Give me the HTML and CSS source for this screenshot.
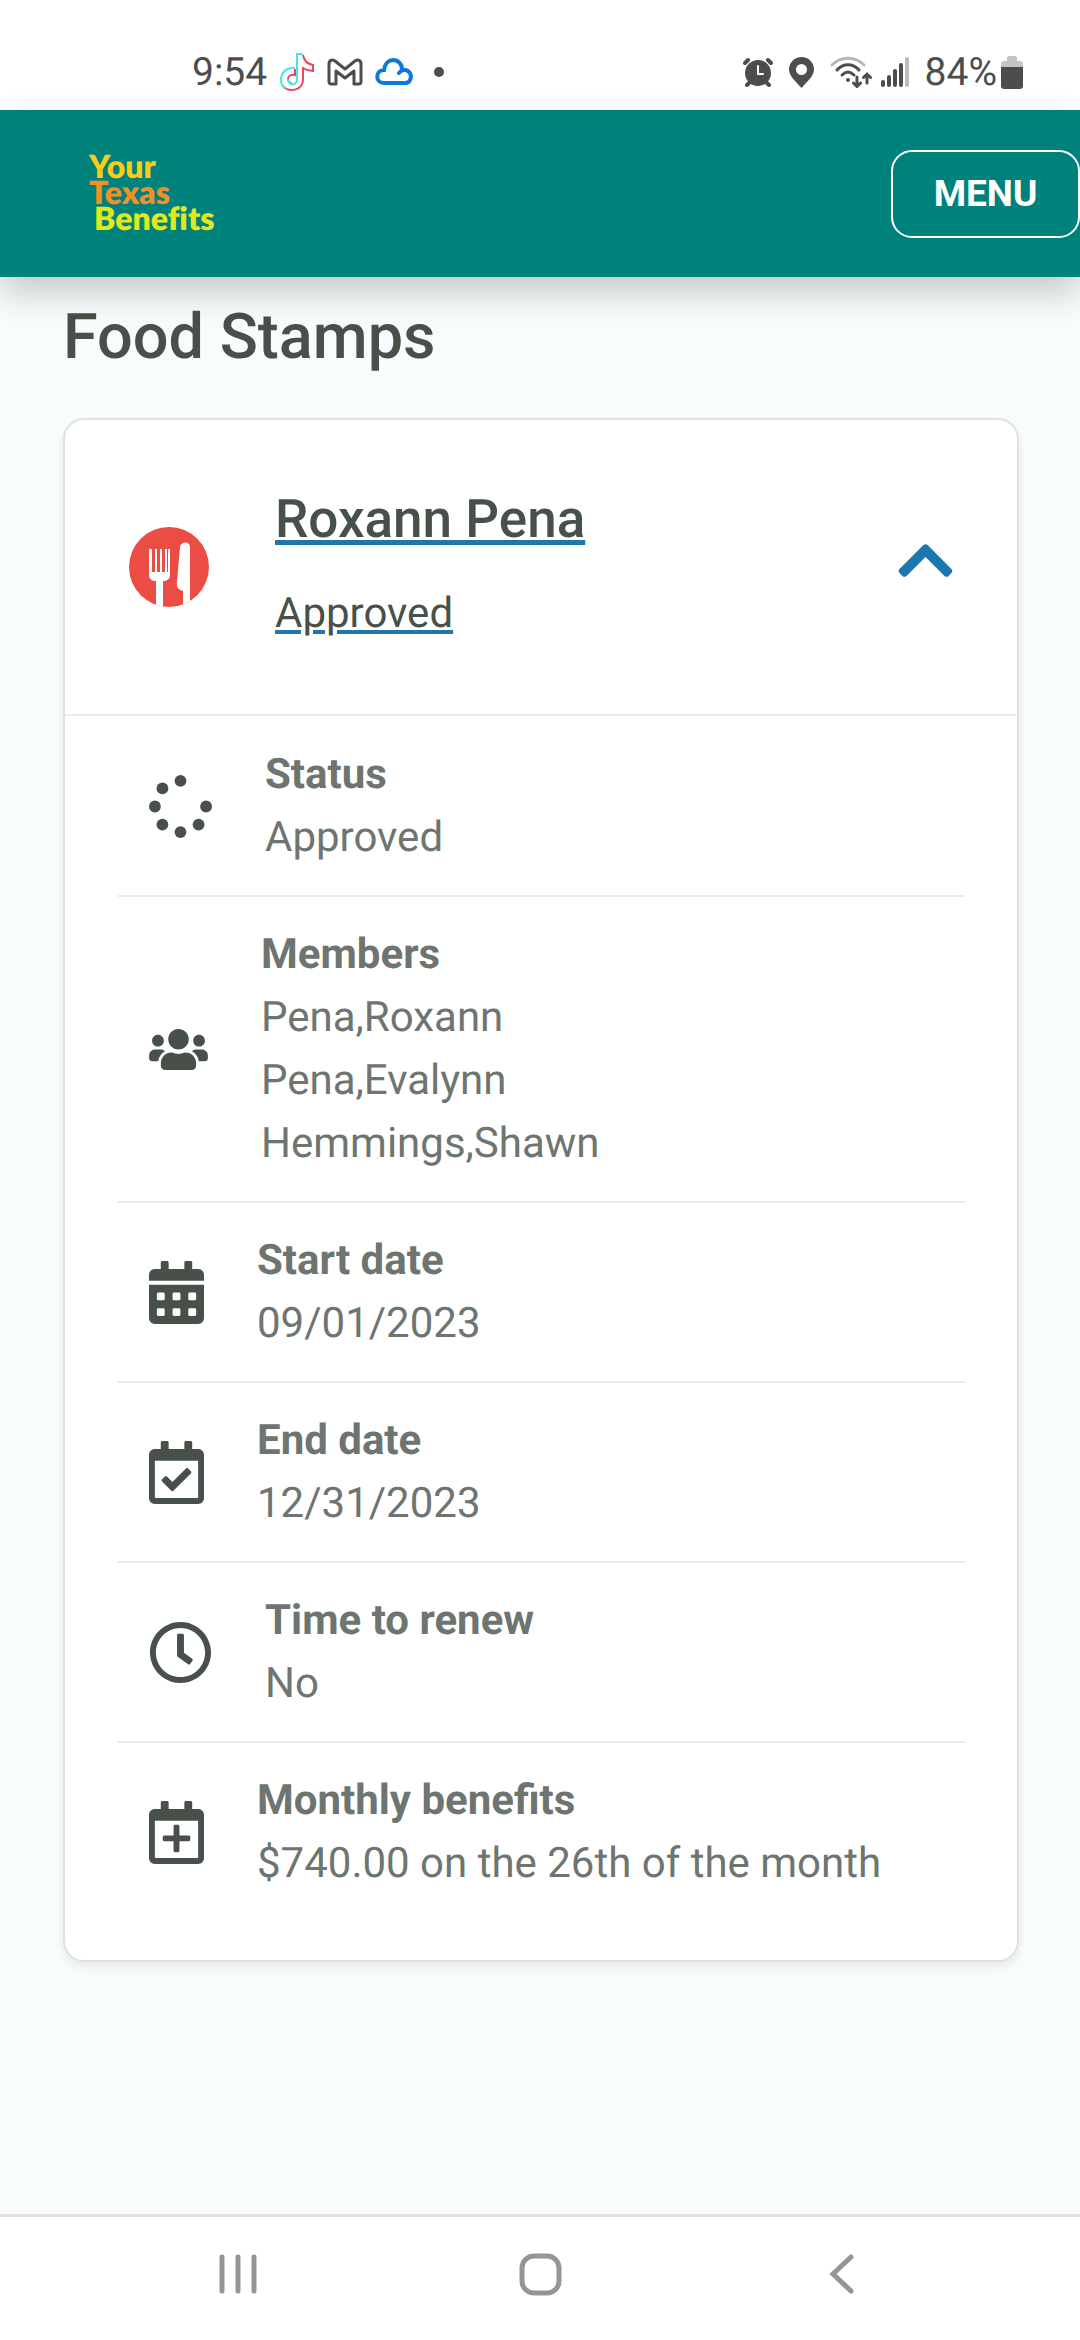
FILE: index.html
```html
<!DOCTYPE html>
<html lang="en">
<head>
    <meta charset="UTF-8">
    <meta name="viewport" content="width=device-width, initial-scale=1.0">
    <title>Your Texas Benefits</title>
    <link rel="stylesheet" href="styles.css">
</head>
<body>

    <!-- Phone status bar -->
    <div class="status-bar">
        <div class="status-left">
            <span class="clock">9:54</span>
            <svg width="36" height="40" viewBox="0 0 36 40" fill="none" stroke-width="2">
                <path stroke="#f0435f" d="M24 3c1 6 4 9 10 10v6c-4 0-7-1-10-3v11c0 7-5 11-11 11-4 0-7-1-9-4"/>
                <path stroke="#4de3e3" d="M16 16c-8-1-14 4-14 12 0 4 2 7 5 8"/>
                <path stroke="#f0435f" d="M16 17v6c-4-1-7 1-7 4 0 2 2 4 4 5"/>
                <path stroke="#4de3e3" d="M24 2h-6v26c0 3-3 5-6 4-2-1-3-3-3-5"/>
            </svg>
            <svg width="36" height="28" viewBox="0 0 36 28" fill="none" stroke="#4d4d4d" stroke-width="3" stroke-linejoin="round">
                <path d="M2 24V6c0-4 4-5 6-3l10 8 10-8c2-2 6-1 6 3v18c0 1-1 2-2 2h-5V13l-9 7-9-7v13H4c-1 0-2-1-2-2z"/>
            </svg>
            <svg width="38" height="28" viewBox="0 0 38 28" fill="none" stroke="#0a78dc" stroke-width="4" stroke-linecap="round">
                <path d="M24 15c2-3 6-4 9-2 5 4 3 12-3 12H9c-9 0-9-13 0-13C10 5 14 2 18 2c5 0 9 4 9 9"/>
            </svg>
            <span class="dot"></span>
        </div>
        <div class="status-right">
            <svg width="30" height="30" viewBox="0 0 30 30" fill="#4d4d4d" stroke="#4d4d4d" stroke-width="4" stroke-linecap="round">
                <circle cx="15" cy="16" r="11"/>
                <path d="M2 6l3-3M28 6l-3-3M4 28l3-3M26 28l-3-3"/>
                <path d="M15 9v8h5" fill="none" stroke="#fff" stroke-width="2"/>
            </svg>
            <svg width="25" height="31" viewBox="0 0 25 31" fill="#4d4d4d">
                <path fill-rule="evenodd" d="M12.500 0C5.500 0 0 5.500 0 12.500c0 7 8 13 12.500 18.500C17 25.500 25 19.500 25 12.500 25 5.500 19.500 0 12.500 0zm0 7a5.500 5.500 0 1 1 0 11 5.500 5.500 0 0 1 0-11z"/>
            </svg>
            <svg class="wifi" width="42" height="32" viewBox="0 0 42 32" fill="none" stroke="#4d4d4d" stroke-width="3" stroke-linecap="round">
                <path stroke="#b8b8b8" d="M2 9c9-9 23-9 32 0"/>
                <path d="M7 14c6-7 16-7 22 0M12 19c4-4 8-4 12 0"/>
                <circle cx="18" cy="24" r="1" fill="#4d4d4d" stroke-width="2"/>
                <path d="M27 21v9M23.500 27l3.500 3.500 3.500-3.500M37 27v-9M33.500 21.500L37 18l3.500 3.500"/>
            </svg>
            <svg width="28" height="30" viewBox="0 0 28 30" fill="#4d4d4d">
                <rect x="0" y="23" width="4" height="7" rx="2"/>
                <rect x="6" y="18" width="4" height="12" rx="2"/>
                <rect x="12" y="12" width="4" height="18" rx="2"/>
                <rect x="18" y="6" width="4" height="24" rx="2"/>
                <rect x="24" y="0" width="4" height="30" rx="2" fill="#bcbcbc"/>
            </svg>
            <span class="battery-text">84%</span>
            <svg class="battery" width="22" height="33" viewBox="0 0 22 33">
                <path fill="#c4c4c4" d="M6 5V2c0-1 1-2 2-2h6c1 0 2 1 2 2v3h3c2 0 3 1 3 3v5H0V8c0-2 1-3 3-3z"/>
                <path fill="#4d4d4d" d="M0 11h22v19c0 2-1 3-3 3H3c-2 0-3-1-3-3z"/>
            </svg>
        </div>
    </div>

    <!-- Site header -->
    <header class="site-header">
        <a href="#" class="logo">
            <span class="logo-your">Your</span>
            <span class="logo-texas">Texas</span>
            <span class="logo-benefits">Benefits</span>
        </a>
        <button type="button" class="menu-btn">MENU</button>
    </header>

    <main>
        <h1>Food Stamps</h1>

        <section class="card">
            <div class="card-header">
                <svg class="food-icon" viewBox="0 0 81 81">
                    <defs>
                        <clipPath id="plate"><circle cx="40" cy="40" r="40"/></clipPath>
                    </defs>
                    <g clip-path="url(#plate)">
                        <rect width="81" height="81" fill="#eb4d45"/>
                        <path fill="#fff" d="M20 22h3v23h3V22h2v23h3V22h2v23h3V22h2v23h1V22h2v26c0 4-3 6-7 6v27h-7V54c-4 0-7-2-7-6z"/>
                        <path fill="#fff" d="M51 20c1-6 10-6 10 0v61h-7V64c-5-1-7-4-6-9z"/>
                    </g>
                </svg>
                <div class="card-title">
                    <a href="#" class="person">Roxann Pena</a>
                    <a href="#" class="result">Approved</a>
                </div>
                <button type="button" class="toggle-btn" aria-label="Collapse">
                    <svg viewBox="0 0 448 512"><path d="M240.971 130.524l194.343 194.343c9.373 9.373 9.373 24.569 0 33.941l-22.667 22.667c-9.357 9.357-24.522 9.375-33.901.04L224 227.495 69.255 381.516c-9.379 9.335-24.544 9.317-33.901-.04l-22.667-22.667c-9.373-9.373-9.373-24.569 0-33.941L207.03 130.525c9.372-9.373 24.568-9.373 33.941-.001z"/></svg>
                </button>
            </div>

            <!-- Case details -->
            <ul class="details">
                <li>
                    <svg class="icon" viewBox="0 0 512 512">
                        <circle cx="256" cy="48" r="48"/>
                        <circle cx="464" cy="256" r="48"/>
                        <circle cx="403" cy="403" r="48"/>
                        <circle cx="256" cy="464" r="48"/>
                        <circle cx="109" cy="403" r="48"/>
                        <circle cx="48" cy="256" r="48"/>
                        <circle cx="109" cy="109" r="48"/>
                    </svg>
                    <div>
                        <h2>Status</h2>
                        <p>Approved</p>
                    </div>
                </li>
                <li>
                    <svg class="icon icon-users" viewBox="0 0 640 512"><path d="M96 224c35.300 0 64-28.700 64-64s-28.700-64-64-64-64 28.700-64 64 28.700 64 64 64zm448 0c35.300 0 64-28.700 64-64s-28.700-64-64-64-64 28.700-64 64 28.700 64 64 64zm32 32h-64c-17.600 0-33.500 7.100-45.100 18.600 40.300 22.100 68.900 62 75.100 109.400h66c17.700 0 32-14.300 32-32v-32c0-35.300-28.700-64-64-64zm-256 0c61.900 0 112-50.100 112-112S381.900 32 320 32 208 82.100 208 144s50.100 112 112 112zm76.800 32h-8.300c-20.800 10-43.900 16-68.500 16s-47.600-6-68.500-16h-8.300C179.600 288 128 339.600 128 403.200V432c0 26.500 21.500 48 48 48h288c26.500 0 48-21.500 48-48v-28.800c0-63.600-51.600-115.200-115.200-115.200zm-223.700-13.400C161.500 263.100 145.600 256 128 256H64c-35.300 0-64 28.700-64 64v32c0 17.700 14.300 32 32 32h65.900c6.300-47.400 34.900-87.300 75.200-109.400z"/></svg>
                    <div>
                        <h2>Members</h2>
                        <p>Pena,Roxann</p>
                        <p>Pena,Evalynn</p>
                        <p>Hemmings,Shawn</p>
                    </div>
                </li>
                <li>
                    <svg class="icon icon-calendar" viewBox="0 0 448 512">
                        <path d="M448 160H0v-48c0-26.500 21.500-48 48-48h48V12c0-6.600 5.400-12 12-12h40c6.600 0 12 5.400 12 12v52h128V12c0-6.600 5.400-12 12-12h40c6.600 0 12 5.400 12 12v52h48c26.500 0 48 21.500 48 48zM0 192h448v272c0 26.500-21.500 48-48 48H48c-26.500 0-48-21.500-48-48z"/>
                        <g fill="#fff">
                            <rect x="64" y="256" width="64" height="64" rx="12"/>
                            <rect x="192" y="256" width="64" height="64" rx="12"/>
                            <rect x="320" y="256" width="64" height="64" rx="12"/>
                            <rect x="64" y="384" width="64" height="64" rx="12"/>
                            <rect x="192" y="384" width="64" height="64" rx="12"/>
                            <rect x="320" y="384" width="64" height="64" rx="12"/>
                        </g>
                    </svg>
                    <div>
                        <h2>Start date</h2>
                        <p>09/01/2023</p>
                    </div>
                </li>
                <li>
                    <svg class="icon icon-calendar" viewBox="0 0 448 512"><path d="M400 64h-48V12c0-6.627-5.373-12-12-12h-40c-6.627 0-12 5.373-12 12v52H160V12c0-6.627-5.373-12-12-12h-40c-6.627 0-12 5.373-12 12v52H48C21.490 64 0 85.490 0 112v352c0 26.510 21.490 48 48 48h352c26.510 0 48-21.490 48-48V112c0-26.510-21.490-48-48-48zm-6 400H54a6 6 0 0 1-6-6V160h352v298a6 6 0 0 1-6 6zm-52.849-200.650L198.842 404.519c-4.705 4.667-12.303 4.637-16.971-.068l-75.091-75.699c-4.667-4.705-4.637-12.303.068-16.971l22.719-22.536c4.705-4.667 12.303-4.637 16.970.069l44.104 44.461 111.072-110.181c4.705-4.667 12.303-4.637 16.971.068l22.536 22.718c4.667 4.705 4.636 12.303-.069 16.970z"/></svg>
                    <div>
                        <h2>End date</h2>
                        <p>12/31/2023</p>
                    </div>
                </li>
                <li>
                    <svg class="icon" viewBox="0 0 512 512"><path d="M256 8C119 8 8 119 8 256s111 248 248 248 248-111 248-248S393 8 256 8zm0 448c-110.500 0-200-89.500-200-200S145.500 56 256 56s200 89.500 200 200-89.500 200-200 200zm61.800-104.400l-84.900-61.700c-3.100-2.300-4.900-5.900-4.900-9.700V116c0-6.600 5.400-12 12-12h32c6.600 0 12 5.400 12 12v141.700l66.800 48.600c5.400 3.900 6.500 11.400 2.600 16.800L334.600 349c-3.900 5.300-11.400 6.500-16.800 2.600z"/></svg>
                    <div>
                        <h2>Time to renew</h2>
                        <p>No</p>
                    </div>
                </li>
                <li>
                    <svg class="icon icon-calendar" viewBox="0 0 448 512"><path d="M336 292v24c0 6.600-5.400 12-12 12h-76v76c0 6.600-5.400 12-12 12h-24c-6.600 0-12-5.400-12-12v-76h-76c-6.600 0-12-5.400-12-12v-24c0-6.600 5.400-12 12-12h76v-76c0-6.600 5.400-12 12-12h24c6.600 0 12 5.400 12 12v76h76c6.600 0 12 5.400 12 12zm112-180v352c0 26.500-21.500 48-48 48H48c-26.500 0-48-21.500-48-48V112c0-26.500 21.500-48 48-48h48V12c0-6.600 5.400-12 12-12h40c6.600 0 12 5.400 12 12v52h128V12c0-6.600 5.400-12 12-12h40c6.600 0 12 5.400 12 12v52h48c26.500 0 48 21.500 48 48zm-48 346V160H48v298c0 3.300 2.700 6 6 6h340c3.300 0 6-2.700 6-6z"/></svg>
                    <div>
                        <h2>Monthly benefits</h2>
                        <p>$740.00 on the 26th of the month</p>
                    </div>
                </li>
            </ul>
        </section>
    </main>

    <!-- Phone navigation -->
    <nav class="phone-nav">
        <button type="button" aria-label="Recent apps">
            <svg width="44" height="44" viewBox="0 0 44 44"><path d="M6 5v34M22 5v34M38 5v34"/></svg>
        </button>
        <button type="button" aria-label="Home">
            <svg width="44" height="44" viewBox="0 0 44 44"><rect x="4" y="4" width="37" height="37" rx="12"/></svg>
        </button>
        <button type="button" aria-label="Back">
            <svg width="44" height="44" viewBox="0 0 44 44"><path d="M31 5L13 22l18 17"/></svg>
        </button>
    </nav>

</body>
</html>
```
FILE: styles.css
```css
* {
    box-sizing: border-box;
}

body {
    margin: 0;
    min-height: 100vh;
    display: flex;
    flex-direction: column;
    font-family: Roboto, Arial, sans-serif;
    font-size: 42px;
    line-height: 63px;
    text-rendering: geometricPrecision;
    color: #48504a;
    background-color: #f8fcfd;
    overflow-x: hidden;
}

h1, h2, p, ul {
    margin: 0;
    padding: 0;
}

svg {
    display: block;
    flex: none;
}

button {
    font-family: inherit;
    cursor: pointer;
}

/* Status bar */
.status-bar {
    display: flex;
    justify-content: space-between;
    height: 110px;
    padding: 34px 57px 0 192px;
    background-color: #fff;
    color: #4d4d4d;
    font-size: 39px;
}

.status-left,
.status-right {
    display: flex;
    align-items: center;
    height: 76px;
}

.status-left {
    gap: 12px;
}

.status-right {
    gap: 16px;
}

.wifi {
    margin-right: -7px;
}

.battery-text {
    margin-right: -12px;
}

.dot {
    width: 10px;
    height: 10px;
    margin-left: 9px;
    border-radius: 50%;
    background-color: #4d4d4d;
}

/* Site header */
.site-header {
    position: relative;
    display: flex;
    align-items: center;
    justify-content: space-between;
    height: 167px;
    padding-left: 89px;
    background-color: #00827c;
    box-shadow: 0 16px 32px rgba(0, 0, 0, 0.2);
}

.logo {
    display: flex;
    flex-direction: column;
    padding-bottom: 4px;
    font-family: Lato, sans-serif;
    font-size: 32px;
    font-weight: 800;
    font-variant-ligatures: none;
    line-height: 26px;
    text-decoration: none;
}

.logo-your {
    color: #fdcb15;
}

.logo-texas {
    color: #f09027;
}

.logo-benefits {
    padding-left: 5px;
    color: #e2e81e;
}

.menu-btn {
    width: 189px;
    height: 88px;
    border: 2px solid #fff;
    border-radius: 21px;
    background: none;
    color: #fff;
    font-size: 37px;
    font-weight: bold;
}

/* Content */
main {
    flex: 1;
    padding: 23px 61px 60px 63px;
}

h1 {
    margin-bottom: 42px;
    font-size: 63px;
    font-weight: 500;
    line-height: 76px;
}

.card {
    background-color: #fff;
    border: 2px solid #dee2e6;
    border-radius: 21px;
    box-shadow: 0 5px 10px rgba(0, 0, 0, 0.08);
}

.card-header {
    display: flex;
    align-items: center;
    height: 296px;
    padding: 0 64px;
    border-bottom: 2px solid #e6edee;
}

.food-icon {
    width: 81px;
    height: 81px;
}

.card-title {
    flex: 1;
    display: flex;
    flex-direction: column;
    align-items: flex-start;
    gap: 31px;
    padding: 0 0 3px 65px;
}

.card-title a {
    color: #48504a;
    text-decoration: underline;
    text-decoration-color: #1f77ab;
}

.person {
    font-size: 53px;
    font-weight: 500;
    line-height: 64px;
}

.toggle-btn {
    margin-bottom: 14px;
    padding: 0;
    border: none;
    background: none;
}

.toggle-btn svg {
    width: 55px;
    height: 63px;
    fill: #1b78ae;
}

/* Details list */
.details {
    padding: 1px 52px 39px 53px;
    list-style: none;
}

.details li {
    display: flex;
    align-items: center;
    gap: 53px;
    padding: 26px 0 26px 31px;
    border-bottom: 2px solid #e6edee;
    color: #6e7570;
}

.details li:last-child {
    border-bottom: none;
}

.details h2 {
    font-size: 42px;
    font-weight: bold;
    line-height: 63px;
}

.icon {
    width: 63px;
    height: 63px;
    fill: #48504a;
}

.icon-users {
    width: 59px;
    height: 47px;
}

.icon-calendar {
    width: 55px;
}

/* Phone navigation */
.phone-nav {
    display: flex;
    height: 126px;
    padding: 0 87px;
    background-color: #fff;
    border-top: 3px solid #e0e0e0;
}

.phone-nav button {
    flex: 1;
    display: flex;
    align-items: center;
    justify-content: center;
    padding: 0 0 10px;
    border: none;
    background: none;
}

.phone-nav svg {
    fill: none;
    stroke: #959595;
    stroke-width: 5;
    stroke-linecap: round;
}
```
